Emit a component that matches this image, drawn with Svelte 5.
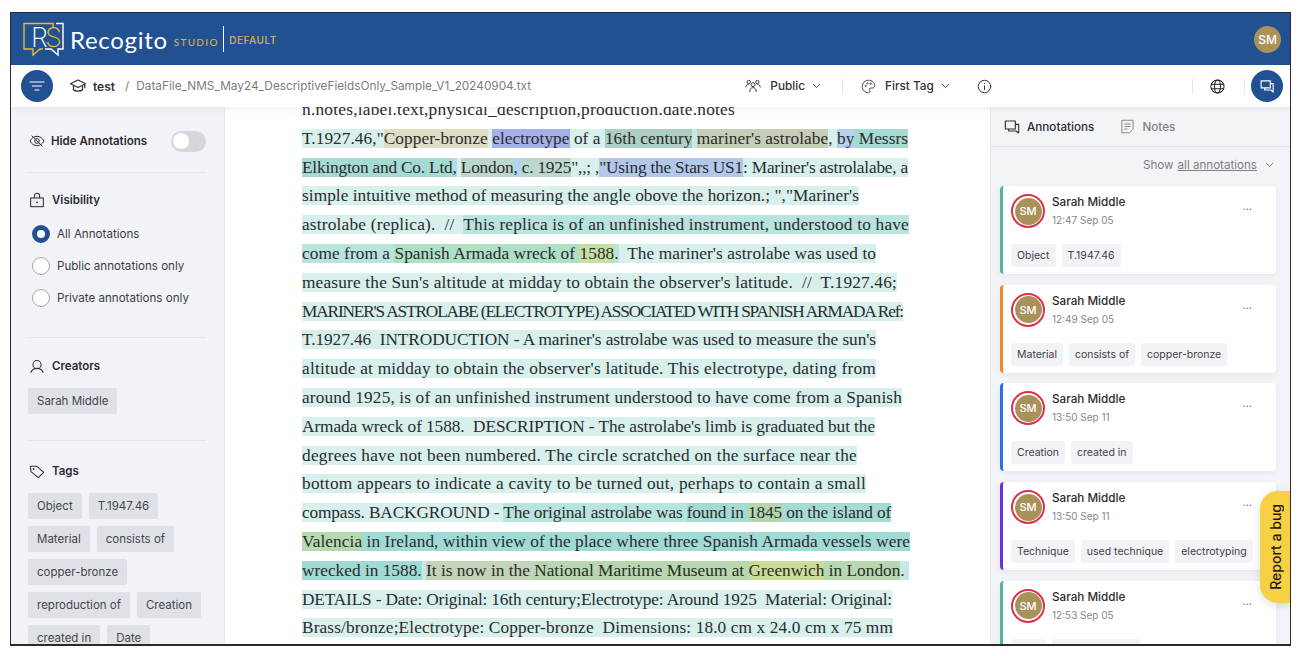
<script lang="ts">
  // Recogito Studio annotation view
  const L = '#d7f0ec'; // light teal
  const M = '#b8e4dd';
  const D = '#a6dbd4';

  // width: measured right edge of each text row, the serif here is not the original one
  const lines: { width: number; parts: [string, string?][] }[] = [
    { width: 433, parts: [['n.notes,label.text,physical_description,production.date.notes']] },
    { width: 606, parts: [['T.1927.46,"', L], ['Copper-bronze', '#e0dcc6'], [' ', L], ['electrotype', '#a5b1e9'], [' of a ', L], ['16th century', '#abcfc0'], [' ', '#c5e8e6'], ["mariner's astrolabe", '#c6cfb6'], [', ', L], ['by', '#b5d1ec'], [' Messrs', D]] },
    { width: 606, parts: [['Elkington and Co. Ltd', D], [',', '#b5dcea'], [' ', L], ['London', '#bcd7cc'], [', ', '#b5d5ea'], ['c. 1925', '#bcd7cc'], ['",,; ,', L], ['"Using the Stars US1', '#b3c8e8'], [": Mariner's astrolalabe, a", L]] },
    { width: 557, parts: [['simple intuitive method of measuring the angle obove the horizon.; ","Mariner\'s', L]] },
    { width: 607, parts: [['astrolabe (replica).  //  ', L], ['This replica is of an unfinished instrument, understood to have', M]] },
    { width: 574, parts: [['come from a ', M], ['Spanish Armada wreck of ', '#aee0c6'], ['1588', '#c6dfa2'], ['.', M], ["  The mariner's astrolabe was used to", L]] },
    { width: 595, parts: [["measure the Sun's altitude at midday to obtain the observer's latitude.  //  T.1927.46;", L]] },
    { width: 601, parts: [["MARINER'S ASTROLABE (ELECTROTYPE) ASSOCIATED WITH SPANISH ARMADA Ref:", L]] },
    { width: 574, parts: [["T.1927.46  INTRODUCTION - A mariner's astrolabe was used to measure the sun's", L]] },
    { width: 574, parts: [["altitude at midday to obtain the observer's latitude. This electrotype, dating from", L]] },
    { width: 600, parts: [['around 1925, is of an unfinished instrument understood to have come from a Spanish', L]] },
    { width: 573, parts: [["Armada wreck of 1588.  DESCRIPTION - The astrolabe's limb is graduated but the", L]] },
    { width: 555, parts: [['degrees have not been numbered. The circle scratched on the surface near the', L]] },
    { width: 564, parts: [['bottom appears to indicate a cavity to be turned out, perhaps to contain a small', L]] },
    { width: 589, parts: [['compass. BACKGROUND - ', L], ['The original astrolabe was ', M], ['found in ', D], ['1845', '#b4d6ae'], [' on the island of', D]] },
    { width: 608, parts: [['Valencia', '#b5dab0'], [' in Ireland, within view of the place where three Spanish Armada vessels were', '#9fdad4']] },
    { width: 607, parts: [['wrecked in 1588.', '#9fdad4'], [' ', '#c6e9e6'], ['It is now in the ', '#c4d4b8'], ['National Maritime Museum at ', '#b6d8ac'], ['Greenwich', '#cbdc96'], [' in London', '#b6d8ac'], ['. ', '#c6e9e6']] },
    { width: 590, parts: [['DETAILS - Date: Original: 16th century;Electrotype: Around 1925  Material: Original:', L]] },
    { width: 591, parts: [['Brass/bronze;Electrotype: Copper-bronze  Dimensions: 18.0 cm x 24.0 cm x 75 mm', L]] },
  ];

  const cards = [
    { color: '#4fb3a9', time: '12:47 Sep 05', tags: ['Object', 'T.1947.46'] },
    { color: '#ee8a2c', time: '12:49 Sep 05', tags: ['Material', 'consists of', 'copper-bronze'] },
    { color: '#2f6fe0', time: '13:50 Sep 11', tags: ['Creation', 'created in'] },
    { color: '#6d2fd6', time: '13:50 Sep 11', tags: ['Technique', 'used technique', 'electrotyping'] },
    { color: '#4fb3a9', time: '12:53 Sep 05', tags: ['Date', 'reproduction of'] },
  ];

  const tagRows = ['Object', 'T.1947.46', 'Material', 'consists of', 'copper-bronze', 'reproduction of', 'Creation', 'created in', 'Date'];
  const radios = ['All Annotations', 'Public annotations only', 'Private annotations only'];

  function fit(node: HTMLElement, width: number) {
    const extra = width - node.getBoundingClientRect().width;
    node.style.letterSpacing = `${extra / (node.textContent?.length || 1)}px`;
  }
</script>

<div class="frame">
  <header class="top">
    <svg class="logo" width="42" height="36" viewBox="0 0 42 36" fill="none">
      <path d="M30 6V1.500H1V27H10V33L17 27H20" stroke="#e9b93a" stroke-width="1.400"/>
      <path d="M33 1.500H40V27H35V33L28 27H22" stroke="#fff" stroke-width="1.400"/>
      <text x="8" y="25" class="logo-r">R</text>
      <text x="22" y="25" class="logo-s">S</text>
    </svg>
    <span class="brand">Recogito</span>
    <span class="studio">STUDIO</span>
    <span class="brand-sep"></span>
    <span class="default">DEFAULT</span>
    <span class="user">SM</span>
  </header>

  <nav class="bar">
    <button class="round" type="button" aria-label="Filter">
      <svg width="16" height="12" viewBox="0 0 16 12" fill="none" stroke="#fff" stroke-width="1.200" stroke-linecap="round">
        <path d="M1 2h14M3.500 6h9M6 10h4"/>
      </svg>
    </button>
    <svg class="crumb-icon" width="18" height="18" viewBox="0 0 24 24" fill="none" stroke="#333" stroke-width="1.700" stroke-linejoin="round">
      <path d="M12 4 2 9l10 5 10-5z"/><path d="M6 11.500V17c2 2.500 10 2.500 12 0v-5.500"/><path d="M21 9.500V15"/>
    </svg>
    <span class="crumb">test</span>
    <span class="slash">/</span>
    <span class="file">DataFile_NMS_May24_DescriptiveFieldsOnly_Sample_V1_20240904.txt</span>

    <div class="bar-mid">
      <svg width="16" height="16" viewBox="0 0 24 24" fill="none" stroke="#444" stroke-width="1.500">
        <circle cx="12" cy="10" r="3"/><path d="M7 21c.5-5 2-6.500 5-6.500s4.500 1.500 5 6.500"/>
        <circle cx="5.500" cy="6" r="2.500"/><circle cx="18.500" cy="6" r="2.500"/><path d="M1 14c.5-3 2-4.500 4.500-4.500M23 14c-.5-3-2-4.500-4.500-4.500"/>
      </svg>
      <span class="mid-label">Public</span>
      <svg class="chev" width="9" height="6" viewBox="0 0 9 6" fill="none" stroke="#555" stroke-width="1"><path d="M1 1l3.500 3.500L8 1"/></svg>
      <span class="vsep"></span>
      <svg width="15" height="15" viewBox="0 0 24 24" fill="none" stroke="#444" stroke-width="1.600">
        <path d="M12 2C6.500 2 2 6.500 2 12s4.500 10 10 10c1.500 0 2.500-1 2.500-2.300 0-1.500-1-2-1-3.200 0-1.200 1-2 2.200-2H18c2.300 0 4-1.700 4-4C22 5.500 17.500 2 12 2z"/>
        <circle cx="7.500" cy="11" r="1"/><circle cx="10.500" cy="7" r="1"/><circle cx="15.500" cy="7.500" r="1"/>
      </svg>
      <span class="mid-label">First Tag</span>
      <svg class="chev" width="9" height="6" viewBox="0 0 9 6" fill="none" stroke="#555" stroke-width="1"><path d="M1 1l3.500 3.500L8 1"/></svg>
      <svg class="info" width="15" height="15" viewBox="0 0 24 24" fill="none" stroke="#333" stroke-width="1.600" stroke-linecap="round">
        <circle cx="12" cy="12" r="10"/><path d="M12 11v6M12 7v.5"/>
      </svg>
    </div>

    <div class="bar-end">
      <span class="vsep a"></span>
      <svg width="15" height="15" viewBox="0 0 24 24" fill="none" stroke="#222" stroke-width="1.700">
        <circle cx="12" cy="12" r="10.500"/><ellipse cx="12" cy="12" rx="4.800" ry="10.500"/><path d="M2 8.500h20M2 15.500h20"/>
      </svg>
      <span class="vsep b"></span>
      <button class="round" type="button" aria-label="Annotations">
        <svg width="17" height="17" viewBox="0 0 24 24" fill="none" stroke="#fff" stroke-width="1.600" stroke-linejoin="round">
          <path d="M3 4h13v10H3z"/><path d="M8 14v3h9l3 3V8h-4"/>
        </svg>
      </button>
    </div>
  </nav>

  <div class="main">
    <aside class="side">
      <section class="sec first">
        <div class="head hide">
          <svg width="16" height="16" viewBox="0 0 24 24" fill="none" stroke="#333" stroke-width="1.500">
            <path d="M1.500 12C4 7.500 7.500 5 12 5s8 2.500 10.500 7c-2.500 4.500-6 7-10.500 7s-8-2.500-10.500-7z"/><circle cx="12" cy="12" r="3.500"/><path d="M4 4l16 16"/>
          </svg>
          <span>Hide Annotations</span>
          <span class="toggle"><i></i></span>
        </div>
      </section>
      <section class="sec vis">
        <div class="head">
          <svg width="16" height="16" viewBox="0 0 24 24" fill="none" stroke="#333" stroke-width="1.600">
            <rect x="2.500" y="9" width="19" height="13"/><path d="M8 9V6a4 4 0 0 1 8 0v3"/><circle cx="12" cy="15.500" r=".6" fill="#333"/>
          </svg>
          <span>Visibility</span>
        </div>
        <ul class="radios">
          {#each radios as r, i}
            <li><span class="radio" class:on={i === 0}></span>{r}</li>
          {/each}
        </ul>
      </section>
      <section class="sec">
        <div class="head">
          <svg width="16" height="15" viewBox="0 0 24 24" fill="none" stroke="#333" stroke-width="1.700">
            <circle cx="12" cy="9" r="6.500"/><path d="M2 22c1.500-4.500 5-7 10-7s8.500 2.500 10 7"/>
          </svg>
          <span>Creators</span>
        </div>
        <div class="chips"><span class="chip">Sarah Middle</span></div>
      </section>
      <section class="sec last">
        <div class="head">
          <svg width="16" height="16" viewBox="0 0 24 24" fill="none" stroke="#333" stroke-width="1.600" stroke-linejoin="round">
            <path d="M2 5h10l10 9-8 8L3 13z"/><circle cx="7" cy="9" r=".6" fill="#333"/>
          </svg>
          <span>Tags</span>
        </div>
        <div class="chips">
          {#each tagRows as t}<span class="chip">{t}</span>{/each}
        </div>
      </section>
    </aside>

    <main class="doc">
      {#each lines as line}
        <div class="line" use:fit={line.width}>{#each line.parts as [t, c]}<span style:background={c}>{t}</span>{/each}</div>
      {/each}
    </main>

    <aside class="panel">
      <div class="tabs">
        <svg width="16" height="16" viewBox="0 0 24 24" fill="none" stroke="#333" stroke-width="1.700" stroke-linejoin="round">
          <path d="M2 3h15v12H2z"/><path d="M7 15v3h11l4 3V8h-5"/>
        </svg>
        <span class="tab on">Annotations</span>
        <svg class="notes-icon" width="15" height="15" viewBox="0 0 24 24" fill="none" stroke="#888" stroke-width="1.600" stroke-linejoin="round">
          <path d="M3 2h18v14l-6 6H3z"/><path d="M7 8h10M7 12h10M7 16h5"/>
        </svg>
        <span class="tab">Notes</span>
      </div>
      <div class="show">
        Show <u>all annotations</u>
        <svg width="9" height="6" viewBox="0 0 9 6" fill="none" stroke="#888" stroke-width="1"><path d="M1 1l3.500 3.500L8 1"/></svg>
      </div>
      <div class="cards">
        {#each cards as card}
          <article class="card" style:border-left-color={card.color}>
            <div class="card-top">
              <span class="ava"><b>SM</b></span>
              <div class="who">
                <div class="name">Sarah Middle</div>
                <div class="time">{card.time}</div>
              </div>
              <span class="more">...</span>
            </div>
            <div class="card-tags">
              {#each card.tags as t}<span class="tag">{t}</span>{/each}
            </div>
          </article>
        {/each}
      </div>
    </aside>
  </div>

  <button class="bug" type="button"><span>Report a bug</span></button>
</div>

<style>
  :global(body) {
    margin: 0;
    background: #fff;
  }

  .frame {
    position: relative;
    box-sizing: border-box;
    width: 1281px;
    height: 634px;
    margin: 12px 0 0 10px;
    border: 1px solid #2b2b2e;
    border-bottom-width: 2px;
    overflow: hidden;
    display: flex;
    flex-direction: column;
    font-family: Inter, "Liberation Sans", sans-serif;
    color: #222;
  }

  /* ---- Header ---- */
  .top {
    flex: 0 0 52px;
    background: #225192;
    display: flex;
    align-items: center;
    padding-left: 12px;
    color: #fff;
  }

  .logo { margin-right: 5px; margin-top: 1px; }
  .logo-r { font: 200 27px Inter, sans-serif; fill: #fff; }
  .logo-s { font: 200 27px Inter, sans-serif; fill: #e9b93a; }

  .brand {
    font: 400 24px Lato, "Open Sans", sans-serif;
    letter-spacing: .7px;
  }

  .studio {
    margin: 5px 0 0 6px;
    font: 500 10px Lato, sans-serif;
    letter-spacing: 1.300px;
    color: #dcb043;
  }

  .brand-sep {
    width: 1.500px;
    height: 26px;
    background: #fff;
    margin: 0 5px 0 4px;
  }

  .default {
    margin-top: 2px;
    font: 600 10px Inter, sans-serif;
    letter-spacing: .5px;
    color: #c4a85a;
  }

  .user {
    margin-left: auto;
    margin-right: 9px;
    width: 27px;
    height: 27px;
    border-radius: 50%;
    background: #a8925a;
    font-size: 12px;
    font-weight: 500;
    display: flex;
    align-items: center;
    justify-content: center;
  }

  /* ---- Toolbar ---- */
  .bar {
    flex: 0 0 42px;
    background: #fff;
    display: flex;
    align-items: center;
    padding: 0 7px 0 10px;
    position: relative;
    z-index: 2;
    box-shadow: 0 2px 6px rgba(30, 40, 70, .07);
    font-size: 11.800px;
  }

  .round {
    width: 32px;
    height: 32px;
    border: 0;
    padding: 0;
    border-radius: 50%;
    background: #225192;
    display: flex;
    align-items: center;
    justify-content: center;
    flex: none;
  }

  .crumb-icon { margin-left: 16px; }
  .crumb { margin-left: 6px; font-weight: 600; color: #333; font-size: 12px; }
  .slash { margin: 0 7px 0 10px; color: #777; }
  .file { color: #7c7c80; flex: 0 0 609px; white-space: nowrap; }

  .bar-mid {
    display: flex;
    align-items: center;
  }

  .mid-label { margin-left: 9px; font-weight: 500; color: #333; }
  .chev { margin-left: 7px; }
  .vsep { width: 1px; height: 15px; background: #e6e6e8; margin: 0 18px 0 21px; }
  .info { margin-left: 27px; }

  .bar-end {
    margin-left: auto;
    display: flex;
    align-items: center;
  }

  .bar-end .vsep.a { margin: 0 17px 0 0; }
  .bar-end .vsep.b { margin: 0 6px 0 19px; }

  /* ---- Columns ---- */
  .main {
    flex: 1;
    min-height: 0;
    display: flex;
  }

  .side {
    flex: 0 0 214px;
    box-sizing: border-box;
    background: #f2f3f8;
    border-right: 1px solid #e8e9ee;
    padding: 0 18px 0 17px;
    overflow: hidden;
  }

  .sec {
    border-bottom: 1px solid #e4e5ea;
    padding: 19px 0 26px;
  }

  .sec.first { padding: 25px 0 22px; }
  .sec.vis { padding: 18px 0 30px; }
  .sec.last { border: 0; padding-top: 21px; }

  .head {
    display: flex;
    align-items: center;
    gap: 7px;
    font-size: 11.500px;
    font-weight: 600;
    color: #2c2c30;
    height: 18px;
    padding-left: 1px;
  }

  .hide { gap: 6px; }

  .toggle {
    margin-left: auto;
    width: 35px;
    height: 21px;
    border-radius: 11px;
    background: #d5d7dc;
    display: flex;
    align-items: center;
    padding-left: 2px;
    box-sizing: border-box;
  }

  .toggle i {
    width: 16px;
    height: 16px;
    border-radius: 50%;
    background: #fff;
  }

  .radios {
    list-style: none;
    margin: 16px 0 0;
    padding: 0 0 0 4px;
    display: flex;
    flex-direction: column;
    gap: 14px;
    font-size: 11.600px;
    color: #3c3c40;
  }

  .radios li {
    display: flex;
    align-items: center;
    gap: 7px;
    height: 18px;
  }

  .radio {
    box-sizing: border-box;
    width: 18px;
    height: 18px;
    border-radius: 50%;
    background: #fff;
    border: 1px solid #a8a9ae;
  }

  .radio.on {
    border: 5px solid #225192;
  }

  .chips {
    display: flex;
    flex-wrap: wrap;
    gap: 7px;
    margin-top: 13px;
  }

  .chip {
    height: 26px;
    padding: 0 9px;
    background: #dfe1e6;
    border-radius: 2px;
    font-size: 11.500px;
    line-height: 26px;
    color: #44464c;
  }

  /* ---- Document ---- */
  .doc {
    flex: 1;
    min-width: 0;
    background: #fff;
    padding-left: 77px;
    overflow: hidden;
    margin-top: -11px;
    font-family: "Liberation Serif", serif;
    font-size: 17.300px;
    color: #2b2b2f;
  }

  .line {
    width: fit-content;
    height: 28.800px;
    line-height: 28.800px;
    white-space: pre;
  }

  /* ---- Right panel ---- */
  .panel {
    flex: 0 0 300px;
    box-sizing: border-box;
    background: #f3f4f8;
    border-left: 1px solid #e6e7ec;
    overflow: hidden;
  }

  .tabs {
    display: flex;
    align-items: center;
    height: 40px;
    box-sizing: border-box;
    padding-left: 13px;
    border-bottom: 1px solid #e3e4e9;
    font-size: 11.700px;
  }

  .tab { margin-left: 7px; color: #808085; font-weight: 500; }
  .tab.on { color: #2c2c30; }
  .notes-icon { margin-left: 26px; }

  .show {
    height: 36px;
    display: flex;
    align-items: center;
    justify-content: flex-end;
    gap: 3px;
    padding-right: 16px;
    font-size: 11.600px;
    color: #7d7d82;
  }

  .show u { margin-left: 1px; }
  .show svg { margin-left: 5px; }

  .cards {
    display: flex;
    flex-direction: column;
    gap: 10.700px;
    padding: 3px 14px 0 9px;
  }

  .card {
    box-sizing: border-box;
    height: 88px;
    flex: none;
    background: #fff;
    border-left: 3px solid;
    border-radius: 4px;
    padding: 8px 12px 0 8px;
    box-shadow: 0 2px 6px rgba(30, 40, 70, .06);
    display: flex;
    flex-direction: column;
  }

  .card-top {
    display: flex;
    align-items: flex-start;
  }

  .ava {
    box-sizing: border-box;
    width: 34px;
    height: 34px;
    border-radius: 50%;
    border: 2px solid #df2f4c;
    padding: 1.500px;
    flex: none;
  }

  .ava b {
    display: flex;
    width: 100%;
    height: 100%;
    border-radius: 50%;
    background: #a8925a;
    color: #fff;
    font-size: 11px;
    font-weight: 500;
    align-items: center;
    justify-content: center;
  }

  .who { margin-left: 7px; }
  .name { font-size: 11.700px; font-weight: 500; color: #2a2a2e; line-height: 17px; }
  .time { font-size: 10px; color: #86868b; line-height: 17px; margin-top: 1px; }

  .more {
    margin-left: auto;
    margin-right: 12px;
    font-size: 11px;
    color: #777;
    line-height: 14px;
    margin-top: 5px;
  }

  .card-tags {
    display: flex;
    gap: 6px;
    margin-top: 15px;
  }

  .tag {
    height: 23px;
    line-height: 23px;
    padding: 0 6px;
    background: #f2f3f7;
    border-radius: 3px;
    font-size: 10.500px;
    color: #3f4045;
    white-space: nowrap;
  }

  /* ---- Floating button ---- */
  .bug {
    position: absolute;
    right: 0;
    top: 478px;
    width: 30px;
    height: 112px;
    border: 0;
    padding: 0;
    background: #f8d043;
    border-radius: 18px 0 0 18px;
    display: flex;
    align-items: center;
    justify-content: center;
    box-shadow: 0 2px 8px rgba(30, 40, 70, .15);
  }

  .bug span {
    writing-mode: vertical-rl;
    transform: rotate(180deg);
    font: 500 14px Inter, sans-serif;
    color: #1c1c1c;
    white-space: nowrap;
  }
</style>
